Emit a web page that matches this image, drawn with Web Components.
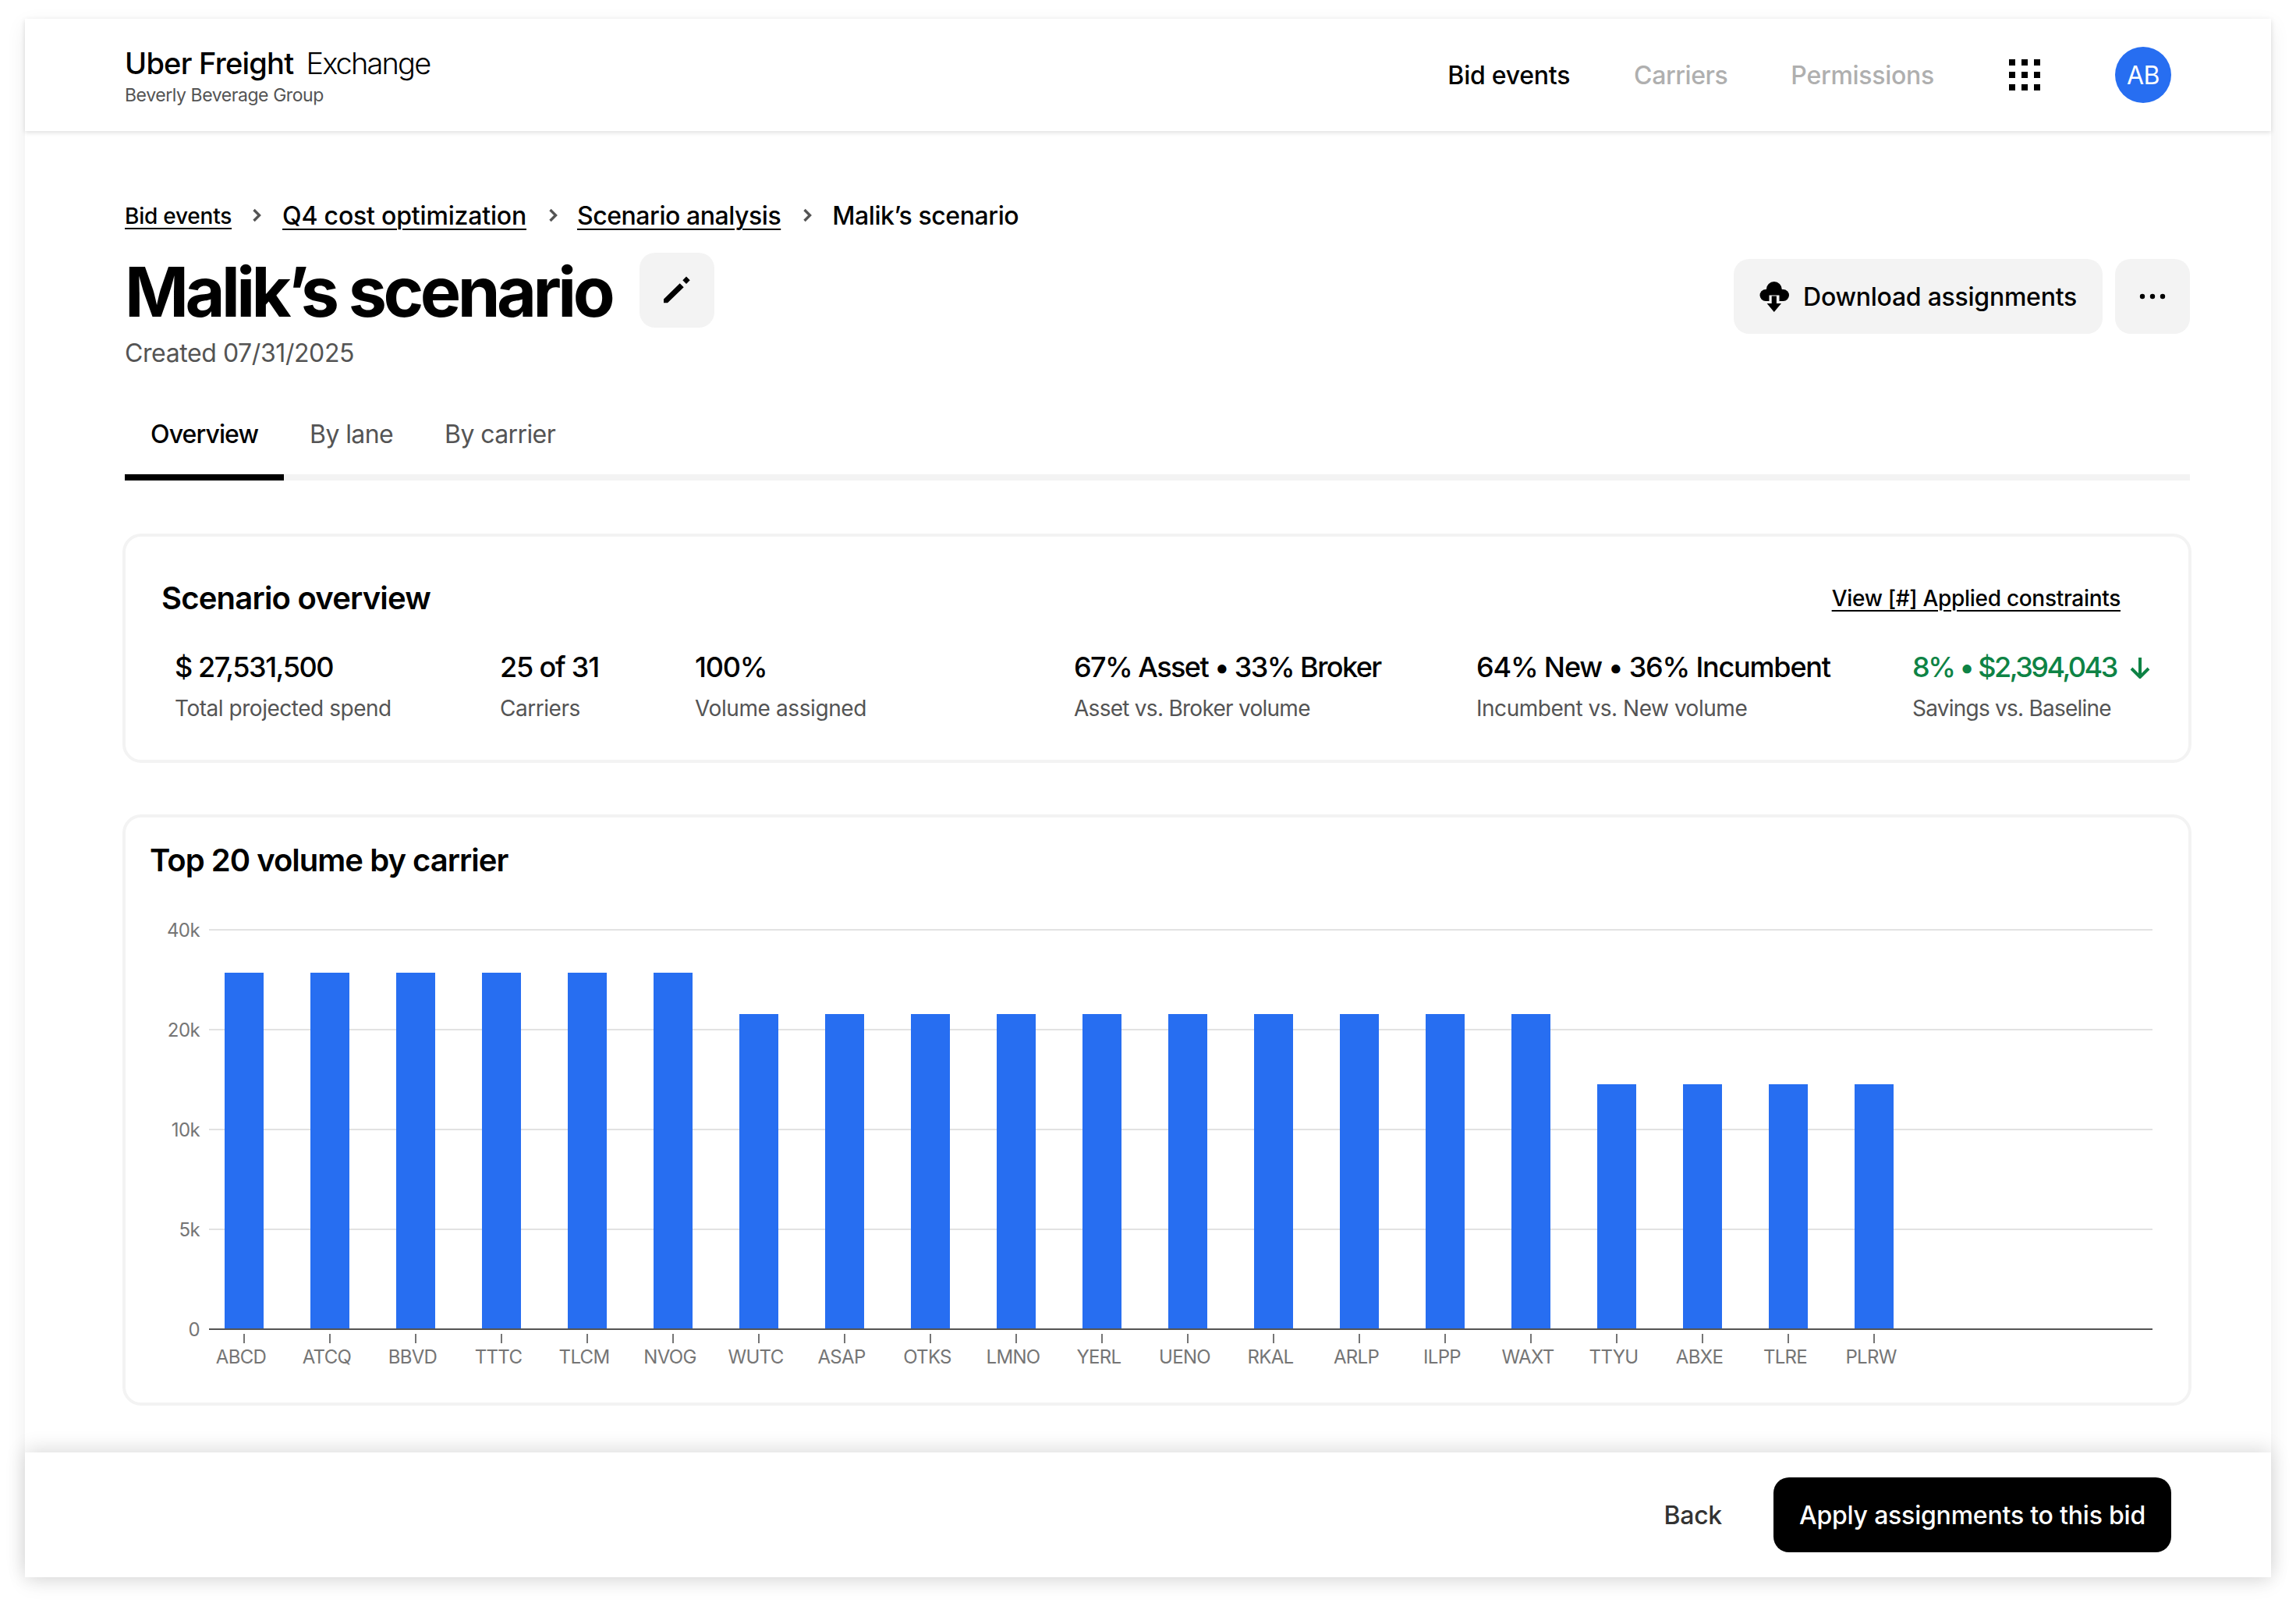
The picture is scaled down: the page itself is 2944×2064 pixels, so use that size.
<!doctype html>
<html lang="en"><head><meta charset="utf-8"><title>Malik’s scenario</title>
<style>
html,body{margin:0;height:100%;background:#fff}
body{font-family:Inter,"Noto Sans",sans-serif;color:#000;overflow:hidden}
</style></head><body>
<uf-app>
  <uf-header slot="header"></uf-header>
  <uf-breadcrumb></uf-breadcrumb>
  <uf-title></uf-title>
  <uf-tabs></uf-tabs>
  <uf-overview></uf-overview>
  <uf-chart></uf-chart>
  <uf-footer slot="footer"></uf-footer>
</uf-app>
<script>
function def(name,html,init){
  customElements.define(name,class extends HTMLElement{
    constructor(){super();this.attachShadow({mode:'open'}).innerHTML=html;}
    connectedCallback(){if(init&&!this._i){this._i=1;init(this.shadowRoot,this);}}
  });
}
def('uf-app',`<style>
:host{display:block;box-sizing:border-box;height:2064px;padding:24px 32px 0}
.panel{height:1998px;display:flex;flex-direction:column;background:#fff;box-shadow:0 8px 24px rgba(0,0,0,.08)}
main{flex:1;box-sizing:border-box;padding:89px 104px 0 128px;min-height:0}
</style><div class="panel"><slot name="header"></slot><main><slot></slot></main><slot name="footer"></slot></div>`);

def('uf-header',`<style>
:host{display:flex;align-items:center;justify-content:space-between;height:144px;padding:0 128px;position:relative;z-index:1;background:#fff;box-shadow:0 2px 6px rgba(0,0,0,.13)}
.brand{display:flex;flex-direction:column}
.top{display:flex;gap:16px;font-size:38px;line-height:48px;height:48px;margin-top:2px}
.uf{font-weight:500;letter-spacing:-.75px}
.ex{font-weight:300;letter-spacing:-1.85px}
.org{font-size:23px;line-height:30px;color:#545454;letter-spacing:-.43px;margin-top:2px}
nav{display:flex;align-items:center;font-size:32px;font-weight:500;letter-spacing:-.43px}
nav a{color:#afafaf;margin-right:81px}
nav a.on{color:#000;letter-spacing:-.25px;margin-right:82px}
nav a:nth-child(3){margin-right:96px;letter-spacing:-.28px}
.grid{display:grid;grid-template-columns:repeat(3,8px);gap:8px;margin-right:96px}
.grid i{width:8px;height:8px;background:#000}
.av{width:72px;height:72px;border-radius:50%;background:#276ef1;color:#fff;font-size:32px;font-weight:400;display:flex;align-items:center;justify-content:center}
</style><div class="brand"><div class="top"><span class="uf">Uber Freight</span><span class="ex">Exchange</span></div><div class="org">Beverly Beverage Group</div></div>
<nav><a class="on">Bid events</a><a>Carriers</a><a>Permissions</a><div class="grid"><i></i><i></i><i></i><i></i><i></i><i></i><i></i><i></i><i></i></div><div class="av">AB</div></nav>`);

const chev=`<svg width="12" height="18" viewBox="0 0 12 18"><path d="M2.5 2l7 7-7 7" fill="none" stroke="#545454" stroke-width="3.4"/></svg>`;
def('uf-breadcrumb',`<style>
:host{display:flex;align-items:center;height:40px;font-size:32px;font-weight:500;letter-spacing:-.19px;line-height:40px}
a{color:#000;text-decoration:underline;text-decoration-thickness:2px;text-underline-offset:5px}
a.s{font-size:28px;letter-spacing:-.23px}
a.n{letter-spacing:-.45px}
svg{margin:-2px 25px 0 28px;flex:none}
svg:first-of-type{margin-left:26px;margin-right:27px}
svg:last-of-type{margin-right:26px}
span{letter-spacing:-.42px}
</style><a class="s">Bid events</a>${chev}<a>Q4 cost optimization</a>${chev}<a class="n">Scenario analysis</a>${chev}<span>Malik’s scenario</span>`);

def('uf-button',`<style>
:host{display:inline-flex;align-items:center;justify-content:center;box-sizing:border-box;height:96px;min-width:96px;border-radius:20px;background:#f3f3f3;font-size:32px;font-weight:500;letter-spacing:-.25px}
:host([pad]){padding:0 33px;gap:18px}
:host([primary]){background:#000;color:#fff;padding:0 33px;letter-spacing:-.21px}
</style><slot></slot>`);

def('uf-title',`<style>
:host{display:block}
.row{display:flex;justify-content:space-between;align-items:flex-start;margin-top:27px}
.l{display:flex;align-items:center;gap:36px;height:96px}
h1{margin:4px 0 0;font-size:88px;line-height:96px;font-weight:700;letter-spacing:-4.55px}
.r{display:flex;gap:16px;margin-top:8px}
p{margin:3px 0 0;font-size:32px;line-height:44px;color:#545454;letter-spacing:-.41px}
svg{display:block;flex:none}
</style>
<div class="row"><div class="l"><h1>Malik’s scenario</h1><uf-button><svg width="56" height="54" viewBox="0 0 56 54"><path d="M11 38.5L31.7 18.3 36.7 23.3 16 43.3H11zM40 9.5L44.7 14.3 40 19 35.3 14.3z" fill="#000"/></svg></uf-button></div>
<div class="r"><uf-button pad><svg width="38" height="39" viewBox="7 6 38 39"><g fill="#000"><circle cx="15" cy="23.5" r="7.5"/><circle cx="37.5" cy="23.5" r="7.5"/><circle cx="25.8" cy="16" r="10"/><rect x="15" y="16" width="22.5" height="15"/></g><rect x="19.5" y="23.5" width="13" height="10" fill="#f3f3f3"/><path d="M22.7 24.5h6.2v9.5h6.1L25.8 45 16.6 34h6.1z" fill="#000"/></svg><span>Download assignments</span></uf-button>
<uf-button><svg width="36" height="10" viewBox="0 0 36 10"><g fill="#000"><circle cx="5" cy="5" r="3.2"/><circle cx="18" cy="5" r="3.2"/><circle cx="31" cy="5" r="3.2"/></g></svg></uf-button></div></div>
<p>Created 07/31/2025</p>`);

def('uf-tabs',`<style>
:host{display:flex;margin-top:60px;border-bottom:8px solid #f3f3f3;font-size:32px;line-height:44px;letter-spacing:-.6px}
a{padding:0 33px 29px;color:#545454;margin-bottom:-8px;border-bottom:8px solid transparent}
a.on{color:#000;font-weight:500;letter-spacing:-.9px;border-bottom-color:#000}
</style><a class="on">Overview</a><a>By lane</a><a>By carrier</a>`);

def('uf-metric',`<style>
:host{display:block}
.v{font-size:36px;line-height:44px;font-weight:500;letter-spacing:var(--ls,-1.2px);display:flex;align-items:center;gap:15px;white-space:nowrap}
:host([good]) .v{color:#0e8345}
.l{margin-top:13px;font-size:28px;line-height:36px;color:#545454;letter-spacing:var(--lls,-.47px);white-space:nowrap}
</style><div class="v"><slot></slot></div><div class="l"></div>`,(r,h)=>{r.querySelector('.l').textContent=h.getAttribute('label');});

def('uf-overview',`<style>
:host{display:block;box-sizing:border-box;margin:68px -2px 0 -3px;height:294px;border:4px solid #f3f3f3;border-radius:24px;padding:55px 87px 0 46px}
.h{display:flex;justify-content:space-between;align-items:center;height:48px}
h2{margin:0;font-size:40px;font-weight:600;letter-spacing:-.8px;line-height:48px}
a{font-size:28px;font-weight:500;letter-spacing:-.3px;text-decoration:underline;text-decoration-thickness:2px;text-underline-offset:5px}
.m{display:grid;grid-template-columns:417px 250px 486px 516px 559px 1fr;margin:42px -85px 0 17px}
svg{flex:none}
</style><div class="h"><h2>Scenario overview</h2><a>View [#] Applied constraints</a></div>
<div class="m">
<uf-metric label="Total projected spend" style="--ls:-1.47px">$ 27,531,500</uf-metric>
<uf-metric label="Carriers">25 of 31</uf-metric>
<uf-metric label="Volume assigned" style="--lls:-.4px">100%</uf-metric>
<uf-metric label="Asset vs. Broker volume" style="--ls:-1.56px;--lls:-.73px">67% Asset • 33% Broker</uf-metric>
<uf-metric label="Incumbent vs. New volume">64% New • 36% Incumbent</uf-metric>
<uf-metric label="Savings vs. Baseline" good style="--ls:-2.5px;--lls:-.77px"><span>8% • $2,394,043</span><svg width="30" height="30" viewBox="0 0 30 30"><path d="M15 3v24M4 17l11 11 11-11" fill="none" stroke="#0e8345" stroke-width="4"/></svg></uf-metric>
</div>`);

def('uf-chart',`<style>
:host{display:block;box-sizing:border-box;margin:66px -2px 0 -3px;height:758px;border:4px solid #f3f3f3;border-radius:24px;padding:31px 46px 0 31px}
h2{margin:0;font-size:40px;font-weight:600;letter-spacing:-.98px;line-height:48px}
.g{display:grid;grid-template-columns:76px 2492px;margin-top:64px}
.y{display:flex;flex-direction:column;justify-content:space-between;height:514px;padding-right:12px;font-size:24px;color:#757575;letter-spacing:-.6px}
.y span{height:2px;display:flex;align-items:center;justify-content:flex-end;white-space:nowrap}
.plot{position:relative;height:514px;display:flex;flex-direction:column;justify-content:space-between}
.plot i{display:block;height:2px;background:#e2e2e2}
.plot i:last-of-type{background:#545454}
.bars{position:absolute;left:-10px;top:0;bottom:2px;display:flex;align-items:flex-end}
.bars div{width:110px;display:flex;justify-content:center}
.bars b{display:block;width:50px;background:#276ef1}
.x{grid-column:2;display:flex;margin:5px 0 0 -10px}
.x div{width:110px;display:flex;flex-direction:column;align-items:center}
.x i{display:block;width:2px;height:12px;background:#757575}
.x span{font-size:24px;line-height:32px;margin-top:2px;padding-right:8px;color:#757575;letter-spacing:-.7px}
</style><h2>Top 20 volume by carrier</h2>
<div class="g"><div class="y"><span>40k</span><span>20k</span><span>10k</span><span>5k</span><span>0</span></div>
<div class="plot"><i></i><i></i><i></i><i></i><i></i><div class="bars"></div></div>
<div class="x"></div></div>`,(r)=>{
const d=[['ABCD',456],['ATCQ',456],['BBVD',456],['TTTC',456],['TLCM',456],['NVOG',456],['WUTC',403],['ASAP',403],['OTKS',403],['LMNO',403],['YERL',403],['UENO',403],['RKAL',403],['ARLP',403],['ILPP',403],['WAXT',403],['TTYU',313],['ABXE',313],['TLRE',313],['PLRW',313]];
r.querySelector('.bars').innerHTML=d.map(a=>`<div><b style="height:${a[1]}px"></b></div>`).join('');
r.querySelector('.x').innerHTML=d.map(a=>`<div><i></i><span>${a[0]}</span></div>`).join('');
});

def('uf-footer',`<style>
:host{display:flex;align-items:center;justify-content:flex-end;height:160px;padding-right:128px;background:#fff;position:relative;box-shadow:0 -4px 24px rgba(0,0,0,.14);font-size:32px;font-weight:500}
a{color:#333;margin-right:66px;letter-spacing:-.3px}
</style><a>Back</a><uf-button primary>Apply assignments to this bid</uf-button>`);
</script>
</body></html>
